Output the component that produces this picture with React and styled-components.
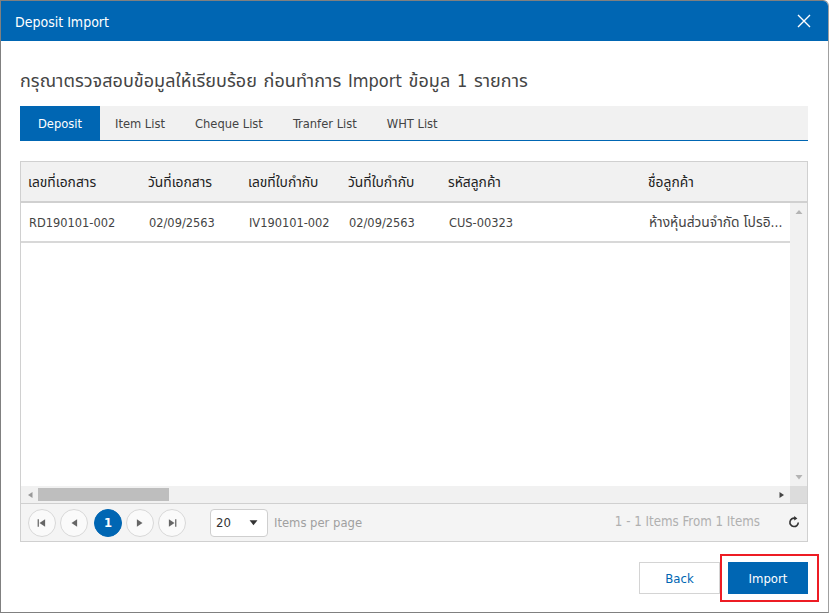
import React from 'react'
import styled, { createGlobalStyle } from 'styled-components'

const columns = [
  { title: 'เลขที่เอกสาร', value: 'RD190101-002', width: 120 },
  { title: 'วันที่เอกสาร', value: '02/09/2563', width: 100 },
  { title: 'เลขที่ใบกำกับ', value: 'IV190101-002', width: 100 },
  { title: 'วันที่ใบกำกับ', value: '02/09/2563', width: 100 },
  { title: 'รหัสลูกค้า', value: 'CUS-00323', width: 200 },
  { title: 'ชื่อลูกค้า', value: 'ห้างหุ้นส่วนจำกัด โปรอิ...', width: 142, thai: true },
]
const tabs = ['Deposit', 'Item List', 'Cheque List', 'Tranfer List', 'WHT List']

const Global = createGlobalStyle`
  html, body { margin: 0; padding: 0; background: #fff; }
  body { font-family: Tahoma, "DejaVu Sans Condensed", "Noto Sans", "Noto Sans Thai", sans-serif; }
  * { box-sizing: border-box; }
`
const Modal = styled.div`
  width: 829px;
  height: 613px;
  display: flex;
  flex-direction: column;
  background: #fff;
  border: 1px solid #808080;
  border-right-color: #a0a0a0;
  border-top-right-radius: 6px;
  overflow: hidden;
`
const Header = styled.header`
  height: 40px;
  flex: none;
  display: flex;
  align-items: center;
  justify-content: space-between;
  padding: 0 17px 0 14px;
  background: #0066b3;
  color: #fff;
  font-size: 14px;
`
const Title = styled.span`
  padding-top: 1px;
`
const CloseButton = styled.button`
  display: flex;
  padding: 0;
  border: 0;
  background: none;
  color: #fff;
`
const Body = styled.main`
  flex: 1;
  display: flex;
  flex-direction: column;
  padding: 0 20px 0 19px;
`
const Heading = styled.h1`
  margin: 28px 0 13px;
  height: 24px;
  font-size: 18px;
  line-height: 24px;
  font-weight: 400;
  letter-spacing: 0.04px;
  word-spacing: 1.5px;
  color: #444;
`
const TabBar = styled.nav`
  display: flex;
  height: 35px;
  flex: none;
  background: #f1f1f1;
  border-bottom: 1px solid #0066b3;
`
const Tab = styled.div`
  height: 34px;
  padding: 0 15px;
  display: flex;
  align-items: center;
  font-size: 12.8px;
  color: ${(p) => (p.$active ? '#fff' : '#444')};
  background: ${(p) => (p.$active ? '#0066b3' : 'transparent')};
  ${(p) => p.$active && 'width: 80px; justify-content: center;'}
`
const Grid = styled.section`
  margin-top: 20px;
  height: 381px;
  flex: none;
  display: flex;
  flex-direction: column;
  border: 1px solid #d0d0d0;
`
const Row = styled.div`
  display: flex;
  flex: none;
`
const HeadRow = styled(Row)`
  height: 41px;
  background: #f1f1f1;
  border-bottom: 2px solid #d0d0d0;
`
const HeadCell = styled.div`
  width: ${(p) => p.$width}px;
  flex: none;
  padding: 1px 0 0 7px;
  display: flex;
  align-items: center;
  font-size: 13.8px;
  color: #222;
  white-space: nowrap;
`
const Middle = styled.div`
  flex: 1;
  display: flex;
  min-height: 0;
`
const Rows = styled.div`
  flex: 1;
  min-width: 0;
  overflow: hidden;
`
const DataRow = styled(Row)`
  height: 40px;
  border-bottom: 2px solid #d8d8d8;
`
const DataCell = styled.div`
  width: ${(p) => p.$width}px;
  flex: none;
  padding: 1px 0 0 8px;
  display: flex;
  align-items: center;
  font-size: ${(p) => (p.$thai ? '13.8px' : '12.7px')};
  color: #444;
  white-space: nowrap;
`
const VScroll = styled.div`
  width: 17px;
  flex: none;
  display: flex;
  flex-direction: column;
  justify-content: space-between;
  align-items: center;
  padding: 5px 0;
  background: #f1f1f1;
`
const HScroll = styled.div`
  height: 18px;
  flex: none;
  display: flex;
  align-items: center;
  background: #f1f1f1;
  border-bottom: 1px solid #d0d0d0;
`
const HArrow = styled.div`
  width: 17px;
  display: flex;
  justify-content: center;
  flex: none;
`
const Track = styled.div`
  flex: 1;
  height: 13px;
`
const Thumb = styled.div`
  width: 131px;
  height: 13px;
  background: #bebebe;
`
const Corner = styled.div`
  width: 17px;
  height: 17px;
  flex: none;
  background: #dcdcdc;
`
const Pager = styled.footer`
  height: 37px;
  flex: none;
  display: flex;
  align-items: center;
  padding: 0 7px;
  background: #f4f4f4;
  font-size: 12.9px;
`
const PageButtons = styled.div`
  display: flex;
  gap: 4px;
`
const PageButton = styled.button`
  width: 28px;
  height: 28px;
  padding: 0;
  display: flex;
  align-items: center;
  justify-content: center;
  border-radius: 50%;
  border: 1px solid ${(p) => (p.$active ? '#0066b3' : '#d8d8d8')};
  background: ${(p) => (p.$active ? '#0066b3' : '#fafafa')};
  color: ${(p) => (p.$active ? '#fff' : '#666')};
  font: inherit;
  font-weight: ${(p) => (p.$active ? 700 : 400)};
  ${(p) => p.$active && 'margin-left: 2px;'}
`
const SizeSelect = styled.div`
  margin-left: 24px;
  width: 58px;
  height: 28px;
  display: flex;
  align-items: center;
  justify-content: space-between;
  padding: 0 9px 0 5px;
  background: #fff;
  border: 1px solid #cfcfcf;
  border-radius: 4px;
  font-size: 13px;
  color: #333;
`
const PerPage = styled.span`
  margin-left: 6px;
  color: #a0a0a0;
`
const Summary = styled.span`
  margin-left: auto;
  color: #b0b0b0;
  font-size: 13.2px;
  margin-top: -2px;
`
const Refresh = styled.div`
  display: flex;
  margin: -2px 0 0 28px;
`
const Actions = styled.div`
  display: flex;
  justify-content: flex-end;
  gap: 8px;
  margin-top: 20px;
`
const BaseButton = styled.button`
  width: 81px;
  height: 32px;
  padding: 1px 0 0;
  font: inherit;
  font-size: 13px;
`
const BackButton = styled(BaseButton)`
  background: #fff;
  border: 1px solid #d4d4d4;
  color: #0066b3;
`
const ImportButton = styled(BaseButton)`
  width: 80px;
  background: #0066b3;
  border: 0;
  color: #fff;
  font-weight: 400;
`
const Highlighted = styled.div`
  position: relative;
  display: flex;
`
const RedBox = styled.div`
  position: absolute;
  left: -8px;
  top: -8px;
  width: 99px;
  height: 48px;
  border: 2px solid #ed1c24;
`

const Tri = ({ dir, color = '#666', size = 8, bar }) => {
  const d = {
    left: 'M6.5 1 L2 4 L6.5 7 Z',
    right: 'M1.5 1 L6 4 L1.5 7 Z',
    up: 'M0.5 6 L4 2 L7.5 6 Z',
    down: 'M0.5 2 L4 6.5 L7.5 2 Z',
  }[dir]
  return (
    <svg width={size} height={size} viewBox="0 0 8 8" fill={color}>
      <path d={d} />
      {bar === 'left' && <rect x="0.5" y="1" width="1" height="6" />}
      {bar === 'right' && <rect x="6.5" y="1" width="1" height="6" />}
    </svg>
  )
}

const App = () => (
  <>
    <Global />
    <Modal>
      <Header>
        <Title>Deposit Import</Title>
        <CloseButton aria-label="Close">
          <svg width="14" height="14" viewBox="0 0 14 14" stroke="currentColor" strokeWidth="1.4">
            <path d="M1 1 L13 13 M13 1 L1 13" />
          </svg>
        </CloseButton>
      </Header>
      <Body>
        <Heading>กรุณาตรวจสอบข้อมูลให้เรียบร้อย ก่อนทำการ Import ข้อมูล 1 รายการ</Heading>
        <TabBar>
          {tabs.map((tab, i) => (
            <Tab key={tab} $active={i === 0}>{tab}</Tab>
          ))}
        </TabBar>
        <Grid>
          <HeadRow>
            {columns.map((c) => (
              <HeadCell key={c.title} $width={c.width}>{c.title}</HeadCell>
            ))}
          </HeadRow>
          <Middle>
            <Rows>
              <DataRow>
                {columns.map((c) => (
                  <DataCell key={c.title} $width={c.width} $thai={c.thai}>{c.value}</DataCell>
                ))}
              </DataRow>
            </Rows>
            <VScroll>
              <Tri dir="up" color="#b4b4b4" />
              <Tri dir="down" color="#b4b4b4" />
            </VScroll>
          </Middle>
          <HScroll>
            <HArrow><Tri dir="left" color="#999" /></HArrow>
            <Track><Thumb /></Track>
            <HArrow><Tri dir="right" color="#444" /></HArrow>
            <Corner />
          </HScroll>
          <Pager>
            <PageButtons>
              <PageButton aria-label="First"><Tri dir="left" bar="left" size={10} /></PageButton>
              <PageButton aria-label="Previous"><Tri dir="left" size={10} /></PageButton>
              <PageButton $active>1</PageButton>
              <PageButton aria-label="Next"><Tri dir="right" size={10} /></PageButton>
              <PageButton aria-label="Last"><Tri dir="right" bar="right" size={10} /></PageButton>
            </PageButtons>
            <SizeSelect>
              <span>20</span>
              <Tri dir="down" color="#333" size={9} />
            </SizeSelect>
            <PerPage>Items per page</PerPage>
            <Summary>1 - 1 Items From 1 Items</Summary>
            <Refresh>
              <svg width="12" height="12" viewBox="0 0 12 12" fill="none" stroke="#333" strokeWidth="1.6">
                <path d="M7.2 2.3 A4.2 4.2 0 1 0 10.3 6.5" />
                <path d="M6.2 0 L9.4 2.4 L6.2 4.6 Z" fill="#333" stroke="none" />
              </svg>
            </Refresh>
          </Pager>
        </Grid>
        <Actions>
          <BackButton>Back</BackButton>
          <Highlighted>
            <ImportButton>Import</ImportButton>
            <RedBox />
          </Highlighted>
        </Actions>
      </Body>
    </Modal>
  </>
)

export default App
